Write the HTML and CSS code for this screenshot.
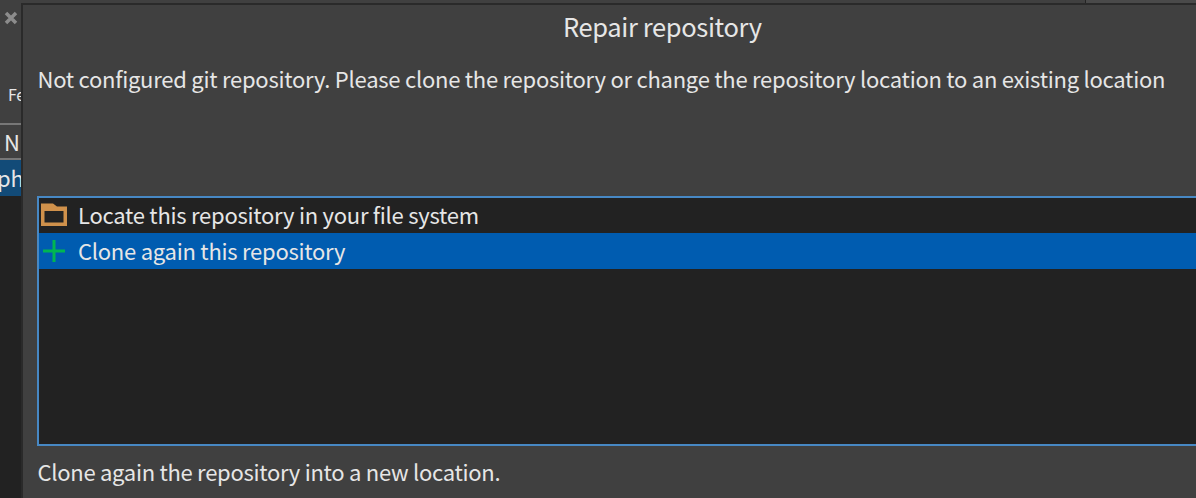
FILE: index.html
```
<!DOCTYPE html>
<html lang="en">
<head>
<meta charset="utf-8">
<title>Repair repository</title>
<link rel="stylesheet" href="styles.css">
</head>
<body>
<div class="window">
  <header class="topbar"><div class="topbar-main"></div><div class="topbar-side"></div></header>
  <div class="body">
    <aside class="sidebar">
      <div class="tools">
        <svg class="close" viewBox="0 0 14 14"><path d="M2 2L12 12M12 2L2 12"/></svg>
        <span class="tool-label">Fe</span>
      </div>
      <div class="column-head">N</div>
      <div class="side-row">ph</div>
    </aside>
    <main class="dialog">
      <h1 class="title">Repair repository</h1>
      <p class="message">Not configured git repository. Please clone the repository or change the repository location to an existing location</p>
      <ul class="options">
        <li class="option">
          <svg class="icon" viewBox="0 0 28 24"><path class="folder" d="M1 0.500H13L17 3.500H27V23H1ZM4.500 8V19.500H23.500V8Z"/></svg>
          <span>Locate this repository in your file system</span>
        </li>
        <li class="option selected">
          <svg class="icon" viewBox="0 0 28 24"><path class="plus" d="M3 13H25M14 2V24"/></svg>
          <span>Clone again this repository</span>
        </li>
      </ul>
      <p class="hint">Clone again the repository into a new location.</p>
    </main>
  </div>
</div>
</body>
</html>
```
FILE: styles.css
```
* { box-sizing: border-box; }
body {
  margin: 0;
  background: #404040;
  color: #e6e6e6;
  font: 22px/36px "Noto Sans CJK SC", "Noto Sans", sans-serif;
  letter-spacing: -0.25px;
  white-space: nowrap;
}
.window { width: 1196px; height: 498px; overflow: hidden; display: flex; flex-direction: column; }
.topbar { height: 3px; display: flex; flex: none; }
.topbar-main { width: 1086px; border-right: 1px solid #242424; }
.topbar-side { flex: 1; background: #4a4a4a; }
.body { flex: 1; display: flex; min-height: 0; }
.sidebar { width: 21px; flex: none; overflow: hidden; background: #222; display: flex; flex-direction: column; }
.tools { height: 120px; flex: none; background: #404040; padding: 8px 0 0 4px; }
.close { display: block; width: 14px; height: 14px; fill: none; stroke: #8c8c8c; stroke-width: 3.5; }
.tool-label { display: block; margin: 57px 0 0 4px; font-size: 16px; line-height: 24px; }
.column-head { height: 37px; flex: none; background: #404040; border-top: 2px solid #777; border-bottom: 2px solid #777; padding-left: 4px; line-height: 33px; }
.side-row { height: 36px; flex: none; background: #124b78; text-indent: -3px; line-height: 34px; }
.dialog { flex: 1; min-width: 0; border: solid #2a2a2a; border-width: 2px 0 0 2px; padding-left: 14px; }
.title { margin: 3px 0 0; padding-left: 526px; font-size: 25.5px; line-height: 36px; font-weight: 400; letter-spacing: -0.37px; }
.message { margin: 16px 0 0; height: 136px; padding-left: 0.5px; }
.options { margin: 0; padding: 0; height: 250px; list-style: none; background: #222; border: 2px solid #4788c4; border-right: 0; }
.option { height: 36px; display: flex; align-items: flex-start; gap: 10px; padding: 5px 0 0 1px; line-height: 24px; }
.option:first-child { height: 35px; line-height: 22px; }
.icon { width: 28px; height: 24px; flex: none; }
.folder { fill: #d0914b; fill-rule: evenodd; }
.plus { fill: none; stroke: #00b652; stroke-width: 3; }
.selected { background: #005cb0; }
.hint { margin: 7px 0 0; padding-left: 0.5px; letter-spacing: -0.28px; }
```
